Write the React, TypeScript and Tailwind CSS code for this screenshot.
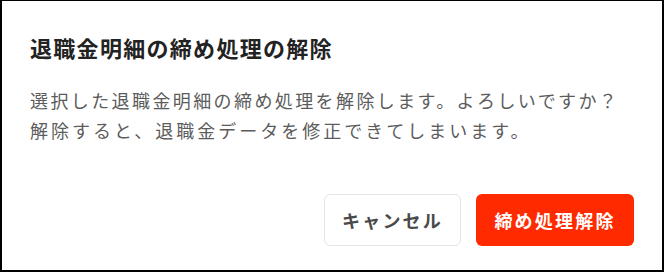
import React from 'react';

export default function App() {
  return (
    <div className="w-[665px] h-[273px] bg-white">
      <div
        className="w-[664px] h-[272px] bg-white border-l-2 border-t border-r-2 border-b-2 border-black flex flex-col px-[28px]"
        style={{ fontFamily: '"Noto Sans CJK JP", "Noto Sans", sans-serif' }}
      >
        <h2 className="mt-[31px] text-[22px] leading-[30px] font-bold text-[#222222] tracking-[1.3px]">
          退職金明細の締め処理の解除
        </h2>
        <p className="mt-[23px] text-[18px] leading-[30px] text-[#5c5c5c] tracking-[2.1px]">
          <span className="tracking-[2.4px]">選択した退職金明細の締め処理を解除します。よろしいですか？</span>
          <br />
          <span className="tracking-[3px]">解除すると、退職金データを修正できてしまいます。</span>
        </p>
        <div className="mt-auto mb-[24px] flex justify-end gap-[15px]">
          <button className="w-[137px] h-[52px] rounded-[6px] border border-[#e4e4e4] bg-white text-[18px] font-bold text-[#4a4a4a] tracking-[2.2px]">
            キャンセル
          </button>
          <button className="w-[158px] h-[52px] rounded-[6px] bg-[#ff2a00] text-[18px] font-bold text-white tracking-[2.2px]">
            締め処理解除
          </button>
        </div>
      </div>
    </div>
  );
}
